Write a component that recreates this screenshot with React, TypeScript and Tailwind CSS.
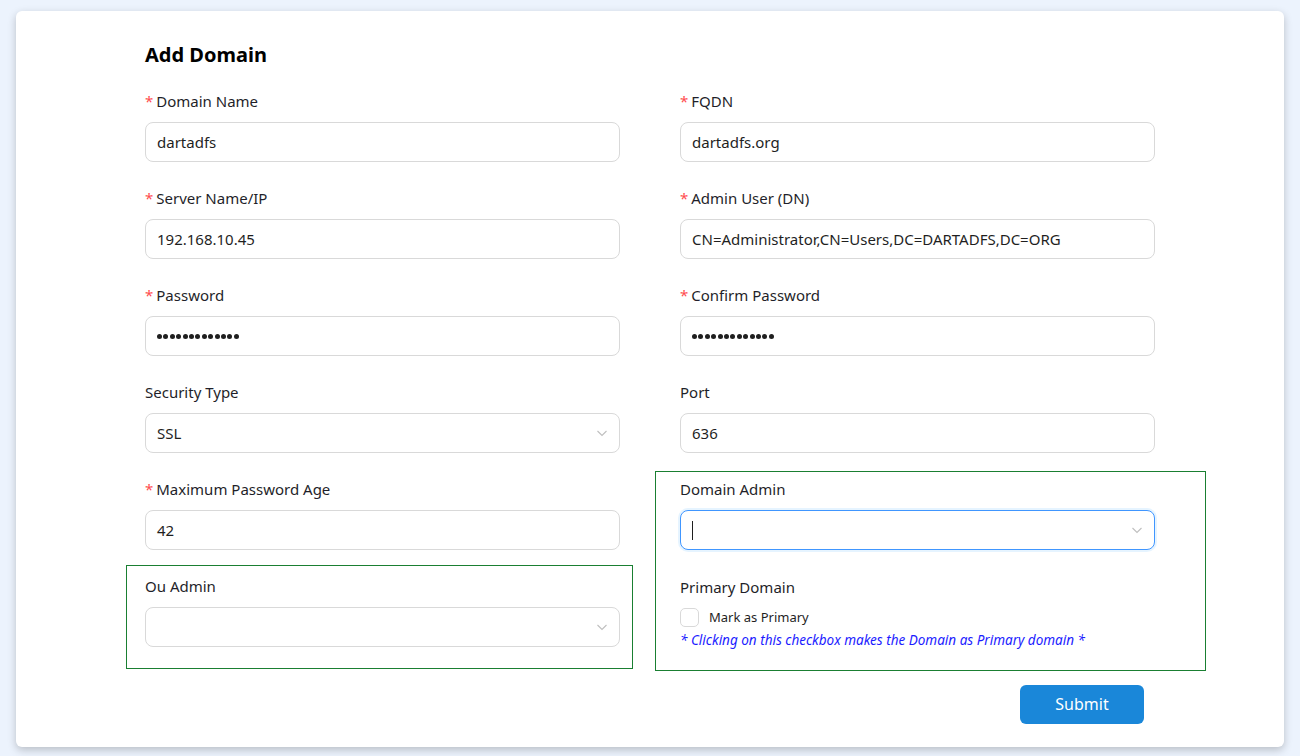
import React from "react";

const FONT = { fontFamily: '"Noto Sans", "Open Sans", "Liberation Sans", sans-serif' };

function Label({ text, required }: { text: string; required?: boolean }) {
  return (
    <div className="h-[24px] leading-[24px] text-[15px] text-[#1f1f2a] flex items-center">
      {required && <span className="text-[#ff4d4f] mr-[3px] text-[15px]">*</span>}
      <span>{text}</span>
    </div>
  );
}

function Chevron() {
  return (
    <svg width="12" height="12" viewBox="0 0 12 12" className="text-[#bfbfbf]">
      <path d="M1.5 4 L6 8.5 L10.5 4" fill="none" stroke="currentColor" strokeWidth="1.1" />
    </svg>
  );
}

function Dots() {
  return (
    <div className="flex items-center gap-[1.4px]">
      {Array.from({ length: 13 }).map((_, i) => (
        <span key={i} className="block w-[5px] h-[5px] rounded-full bg-[#1f1f1f]" />
      ))}
    </div>
  );
}

function Field({
  label,
  required,
  value,
  select,
  focused,
  password,
}: {
  label: string;
  required?: boolean;
  value?: string;
  select?: boolean;
  focused?: boolean;
  password?: boolean;
}) {
  return (
    <div className="flex flex-col">
      <Label text={label} required={required} />
      <div
        className={
          "mt-[9px] h-[40px] rounded-[8px] border bg-white flex items-center pl-[11px] pr-[11px] text-[15px] text-[#1f1f1f] " +
          (focused
            ? "border-[#4096ff] shadow-[0_0_0_2px_rgba(5,145,255,0.1)]"
            : "border-[#d9d9d9]")
        }
      >
        <div className="flex-1 flex items-center">
          {password ? <Dots /> : <span>{value}</span>}
          {focused && <span className="inline-block w-[1px] h-[19px] bg-[#1f1f1f]" />}
        </div>
        {select && <Chevron />}
      </div>
    </div>
  );
}

export default function App() {
  return (
    <div className="min-h-[756px] w-full bg-[#ecf3fd] pt-[11px] pb-[9px]" style={FONT}>
      <div className="mx-[16px] h-[736px] bg-white rounded-[6px] shadow-[0_3px_8px_rgba(0,0,0,0.22)] px-[129px] pt-[30px]">
        <h1 className="text-[20px] leading-[28px] font-bold text-black">Add Domain</h1>
        <div className="mt-[20px] grid grid-cols-2 gap-x-[60px] gap-y-[24px]">
          <Field label="Domain Name" required value="dartadfs" />
          <Field label="FQDN" required value="dartadfs.org" />
          <Field label="Server Name/IP" required value="192.168.10.45" />
          <Field label="Admin User (DN)" required value="CN=Administrator,CN=Users,DC=DARTADFS,DC=ORG" />
          <Field label="Password" required password />
          <Field label="Confirm Password" required password />
          <Field label="Security Type" value="SSL" select />
          <Field label="Port" value="636" />
        </div>
        <div className="mt-[24px] grid grid-cols-2 gap-x-[60px] items-start">
          <div className="flex flex-col">
            <Field label="Maximum Password Age" required value="42" />
            <div className="mt-[15px] ml-[-19px] mr-[-13px] border border-[#1a7f32] pl-[18px] pr-[12px] pt-[8px] pb-[21px]">
              <Field label="Ou Admin" value="" select />
            </div>
          </div>
          <div className="mt-[-6px] ml-[-25px] mr-[-51px] border border-[#1a7f32] pl-[24px] pr-[50px] pt-[5px] pb-[20px]">
            <Field label="Domain Admin" value="" select focused />
            <div className="mt-[25px]">
              <Label text="Primary Domain" />
            </div>
            <div className="mt-[9px] flex items-center">
              <div className="w-[19px] h-[19px] rounded-[5px] border border-[#d9d9d9] bg-white" />
              <span className="ml-[10px] text-[13px] text-[#1f1f1f]">Mark as Primary</span>
            </div>
            <div className="mt-[2px] text-[13.5px] italic text-[#1c1cff] leading-[20px]">
              * Clicking on this checkbox makes the Domain as Primary domain *
            </div>
          </div>
        </div>
        <div className="mt-[14px] flex justify-end pr-[11px]">
          <button className="w-[124px] h-[39px] rounded-[6px] bg-[#1a87d9] text-white text-[16px]">
            Submit
          </button>
        </div>
      </div>
    </div>
  );
}
